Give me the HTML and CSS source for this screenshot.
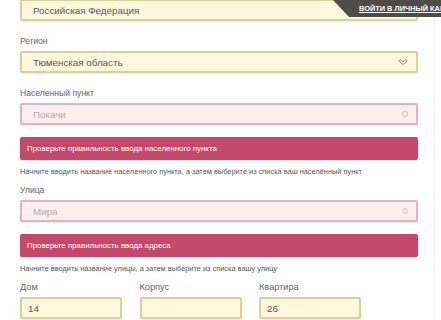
FILE: index.html
```html
<!DOCTYPE html>
<html lang="ru">
<head>
<meta charset="utf-8">
<link rel="stylesheet" href="styles.css">
</head>
<body>
<div class="page">
  <div class="form">
    <div class="field field-first">Российская Федерация</div>

    <div class="label">Регион</div>
    <div class="field field-select">
      <span>Тюменская область</span>
      <svg class="chev" width="10" height="7" viewBox="0 0 10 7"><path d="M0.8 1.6 L2.8 0.8 L5 3 L7.2 0.8 L9.2 1.6 L5 5.8 Z" fill="none" stroke="#8d8872" stroke-width="0.9" stroke-linejoin="round"/></svg>
    </div>

    <div class="label">Населенный пункт</div>
    <div class="field field-error">
      <span>Покачи</span>
      <svg class="mark" width="6" height="6" viewBox="0 0 6 6"><rect x="0.7" y="0.7" width="4.6" height="4.6" rx="1" fill="none" stroke="#d9b4bf" stroke-width="0.9"/></svg>
    </div>
    <div class="alert">Проверьте правильность ввода населенного пункта</div>
    <div class="help">Начните вводить название населенного пункта, а затем выберите из списка ваш населённый пункт</div>

    <div class="label">Улица</div>
    <div class="field field-error">
      <span>Мира</span>
      <svg class="mark" width="6" height="6" viewBox="0 0 6 6"><circle cx="3" cy="3" r="2.3" fill="none" stroke="#d9b4bf" stroke-width="0.9"/></svg>
    </div>
    <div class="alert">Проверьте правильность ввода адреса</div>
    <div class="help">Начните вводить название улицы, а затем выберите из списка вашу улицу</div>

    <div class="row">
      <div class="col">
        <div class="label label-big">Дом</div>
        <div class="field field-small">14</div>
      </div>
      <div class="col">
        <div class="label label-big">Корпус</div>
        <div class="field field-small"></div>
      </div>
      <div class="col">
        <div class="label label-big">Квартира</div>
        <div class="field field-small">26</div>
      </div>
    </div>
  </div>
</div>
<div class="login"><span class="login-text">ВОЙТИ В ЛИЧНЫЙ КАБ</span></div>
</body>
</html>
```

FILE: styles.css
```css
html, body {
  margin: 0;
  padding: 0;
  background: #ffffff;
}
body {
  position: relative;
  width: 441px;
  height: 320px;
  font-family: "Liberation Sans", Arial, sans-serif;
  color: #555;
  overflow: hidden;
}
.page {
  width: 434px;
  height: 320px;
  border-right: 1px solid #f1efef;
  overflow: hidden;
}
.form {
  width: 398px;
  padding-left: 20px;
}
.field {
  box-sizing: border-box;
  height: 22px;
  background: #fdf7dc;
  border: 2px solid #dbd09c;
  border-radius: 2px;
  padding-left: 11px;
  padding-right: 8px;
  font-size: 9.8px;
  color: #585858;
  display: flex;
  align-items: center;
  justify-content: space-between;
  box-shadow: 0 1px 1px rgba(0,0,0,0.08);
}
.field-first {
  margin-top: -1px;
}
.label {
  margin-top: 14px;
  margin-bottom: 4px;
  height: 12px;
  line-height: 12px;
  font-size: 8.6px;
  color: #666;
}
.field-error {
  background: #fdeef0;
  border-color: #e2b3c0;
  color: #b5a9ab;
}
.alert {
  box-sizing: border-box;
  margin-top: 12px;
  height: 23px;
  background: #c4486a;
  border-radius: 2px;
  padding-left: 7px;
  color: #fff;
  font-size: 7.9px;
  display: flex;
  align-items: center;
  box-shadow: 0 1px 1px rgba(0,0,0,0.12);
}
.help {
  margin-top: 6px;
  height: 12px;
  line-height: 12px;
  font-size: 7.4px;
  color: #555;
  white-space: nowrap;
}
.help + .label {
  margin-top: 6px;
}
.row {
  display: grid;
  grid-template-columns: 102px 102px 102px;
  column-gap: 17.5px;
  margin-top: 6px;
}
.label-big {
  margin-top: 0;
  font-size: 9.2px;
}
.field-small {
  padding-left: 6px;
}
.chev {
  display: block;
  margin-right: 0;
}
.mark {
  display: block;
}
.login {
  position: absolute;
  top: 0;
  left: 333px;
  width: 108px;
  height: 17px;
  background: #4d4c47;
  clip-path: polygon(0 0, 100% 0, 100% 100%, 16px 100%);
  display: flex;
  align-items: center;
  padding-left: 26px;
  box-sizing: border-box;
}
.login-text {
  font-size: 7.4px;
  font-weight: bold;
  color: #fff;
  text-decoration: underline;
  white-space: nowrap;
  margin-top: -1px;
}
```
